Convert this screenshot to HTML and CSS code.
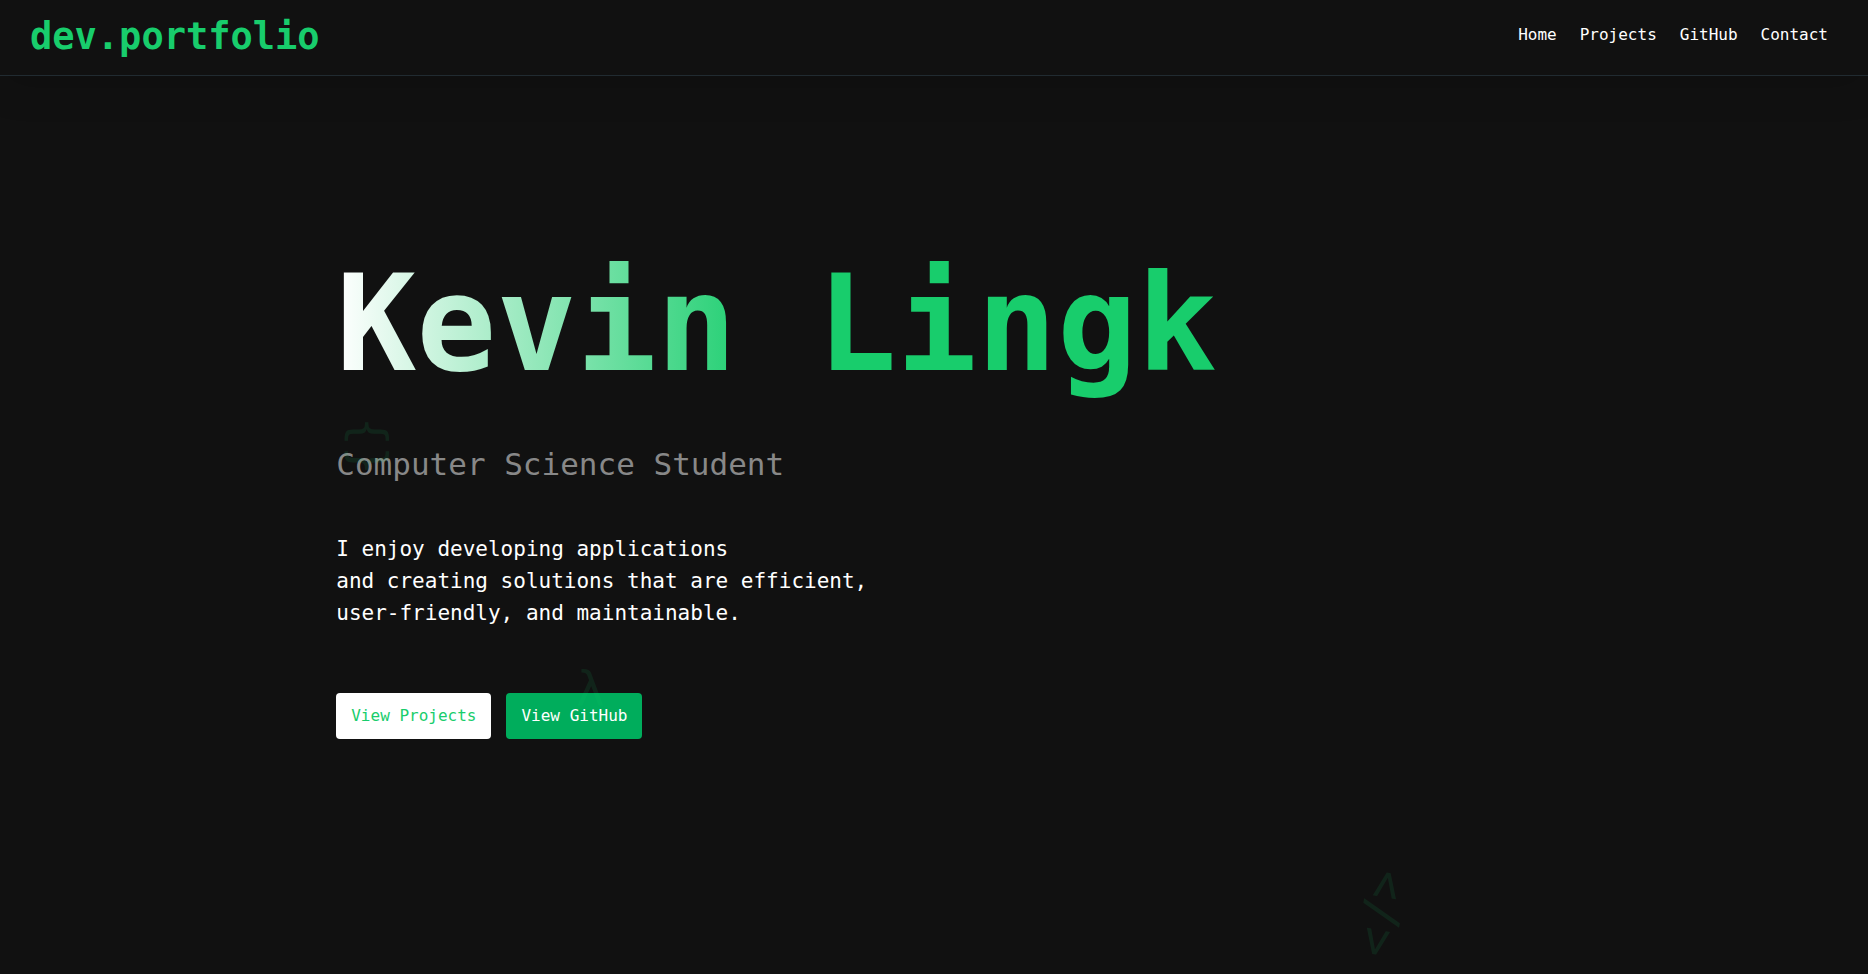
FILE: index.html
```html
<!DOCTYPE html>
<html lang="en">
<head>
<meta charset="utf-8">
<meta name="viewport" content="width=device-width, initial-scale=1">
<title>dev.portfolio</title>
<link rel="stylesheet" href="styles.css">
</head>
<body>
<header class="site-header">
  <a class="logo" href="#home">dev.portfolio</a>
  <nav class="nav" aria-label="Main">
    <a href="#home">Home</a>
    <a href="#projects">Projects</a>
    <a href="#github">GitHub</a>
    <a href="#contact">Contact</a>
  </nav>
</header>
<main class="hero" id="home">
  <h1 class="title">Kevin Lingk</h1>
  <h2 class="subtitle">Computer Science Student</h2>
  <p class="intro">I enjoy developing applications<br>and creating solutions that are efficient,<br>user-friendly, and maintainable.</p>
  <div class="actions">
    <a class="button button-light" href="#projects">View Projects</a>
    <a class="button button-green" href="#github">View GitHub</a>
  </div>
  <span class="symbol symbol-braces" aria-hidden="true">{}</span>
  <span class="symbol symbol-lambda" aria-hidden="true">λ</span>
  <span class="symbol symbol-tag" aria-hidden="true">&lt;/&gt;</span>
</main>
</body>
</html>
```
FILE: styles.css
```css
* {
  box-sizing: border-box;
}

body {
  margin: 0;
  min-height: 100vh;
  display: flex;
  flex-direction: column;
  background: #111;
  color: #fff;
  font-family: "DejaVu Sans Mono", "Liberation Mono", monospace;
}

a {
  color: inherit;
  text-decoration: none;
}

.site-header {
  display: flex;
  align-items: center;
  justify-content: space-between;
  padding: 13px 40px 14px 30px;
  border-bottom: 1px solid #212b31;
  box-shadow: 0 8px 40px rgba(0, 0, 0, 0.15);
}

.logo {
  color: #18cd6c;
  font-size: 37px;
  font-weight: 700;
  line-height: 48px;
}

.nav {
  display: flex;
  flex-wrap: wrap;
  gap: 23px;
  padding-bottom: 4px;
  font-size: 16px;
  line-height: 24px;
}

.hero {
  position: relative;
  flex: 1;
  padding: 168px 18% 64px;
  overflow: hidden;
}

.title {
  margin: 0 0 40px;
  font-size: 133px;
  font-weight: 700;
  line-height: 160px;
  background: linear-gradient(90deg, #fff, #18cd6c 36%);
  -webkit-background-clip: text;
  background-clip: text;
  color: transparent;
}

.subtitle {
  margin: 0 0 49px;
  color: #888;
  font-size: 31px;
  font-weight: 400;
  line-height: 40px;
}

.intro {
  margin: 0 0 64px;
  font-size: 21px;
  line-height: 32px;
}

.actions {
  display: flex;
  flex-wrap: wrap;
  gap: 15px;
}

.button {
  padding: 11px 15px;
  border-radius: 4px;
  font-size: 16px;
  line-height: 24px;
}

.button-light {
  background: #fff;
  color: #18cd6c;
}

.button-green {
  background: #00ad5c;
}

.symbol {
  position: absolute;
  color: #18cd6c;
  font-size: 48px;
  line-height: 56px;
  opacity: 0.1;
  pointer-events: none;
}

.symbol-braces {
  top: 342px;
  left: 340px;
  transform: rotate(90deg);
}

.symbol-lambda {
  top: 585px;
  left: 576px;
}

.symbol-tag {
  top: 810px;
  left: 1340px;
  transform: rotate(100deg);
}
```
